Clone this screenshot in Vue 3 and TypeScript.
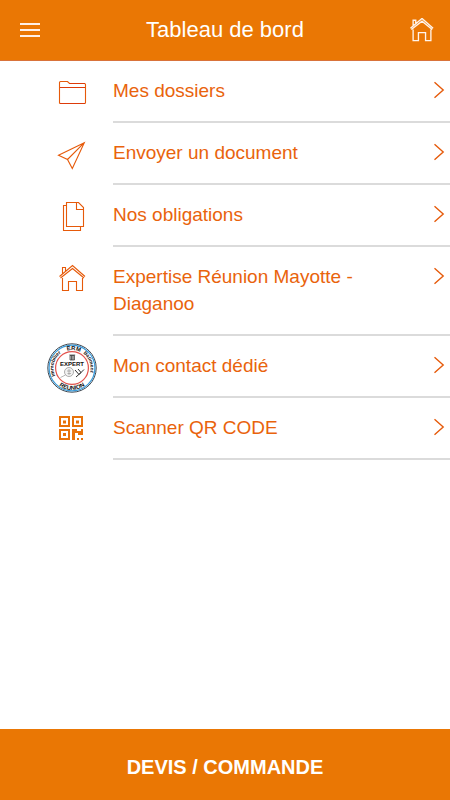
<script setup lang="ts">
type IconName = 'folder' | 'plane' | 'documents' | 'home' | 'stamp' | 'qr'

interface MenuEntry {
  label: string
  icon: IconName
}

const entries: MenuEntry[] = [
  { label: 'Mes dossiers', icon: 'folder' },
  { label: 'Envoyer un document', icon: 'plane' },
  { label: 'Nos obligations', icon: 'documents' },
  { label: 'Expertise Réunion Mayotte - Diaganoo', icon: 'home' },
  { label: 'Mon contact dédié', icon: 'stamp' },
  { label: 'Scanner QR CODE', icon: 'qr' },
]
</script>

<template>
  <div class="screen">
    <header class="topbar">
      <button class="bar-button" type="button" aria-label="Menu">
        <svg class="burger" viewBox="0 0 20 16" aria-hidden="true">
          <path d="M0 2H20M0 8H20M0 14H20" />
        </svg>
      </button>
      <h1 class="title">Tableau de bord</h1>
      <a class="bar-button" href="#" aria-label="Accueil">
        <svg class="bar-home" viewBox="12 11 27 27" aria-hidden="true">
          <path d="M12.5 22.5 25.5 11.5 38 22.5M13.5 24 25.5 14.5 37 24M15.5 24V36.5H21.5V27.5H29.5V36.5H35.5V24M15.5 19.5V13.5H18.5V17" />
        </svg>
      </a>
    </header>

    <main class="content">
      <ul class="menu">
        <li v-for="entry in entries" :key="entry.label">
          <a class="entry" href="#">
            <svg class="icon" viewBox="0 0 50 50" aria-hidden="true">
              <template v-if="entry.icon === 'folder'">
                <path class="line" d="M12.5 35.5V14.5Q12.5 13.5 13.5 13.5H20.5L22.5 15.5H37.5Q38.5 15.5 38.5 16.5V34.5Q38.5 35.5 37.5 35.5H13.5Q12.5 35.5 12.5 34.5" />
                <path class="line deep" d="M13 19.5H38M22.5 15.5H38M13 35.5H38" />
              </template>
              <path v-else-if="entry.icon === 'plane'" class="line" d="M37.3 12.7 11.5 25.3 20.5 29.5 25.3 38.5ZM20.5 29.5 37.3 12.7" />
              <template v-else-if="entry.icon === 'documents'">
                <path class="line" d="M19.5 10.5H31.5L36.5 15.5V34.5H19.5ZM29.5 11V17.5H36" />
                <path class="line" d="M19 13.5H16.5V38.5H33.5V35" />
              </template>
              <path v-else-if="entry.icon === 'home'" class="line" d="M12.5 22.5 25.5 11.5 38 22.5M13.5 24 25.5 14.5 37 24M15.5 24V36.5H21.5V27.5H29.5V36.5H35.5V24M15.5 19.5V13.5H18.5V17" />
              <template v-else-if="entry.icon === 'stamp'">
                <defs>
                  <path id="stamp-upper" d="M7 25A18 18 0 0 1 43 25" />
                  <path id="stamp-left" d="M10.8 36.9A18.5 18.5 0 0 1 25 6.5" />
                  <path id="stamp-right" d="M25 6.5A18.5 18.5 0 0 1 39.2 36.9" />
                  <path id="stamp-lower" d="M3 25A22 22 0 0 0 47 25" />
                </defs>
                <circle cx="25" cy="25" r="24.2" fill="#fff" stroke="#27313c" stroke-width="0.9" />
                <circle cx="25" cy="25" r="22.9" fill="none" stroke="#3b9bd9" stroke-width="1.2" />
                <circle cx="25" cy="25" r="16.4" fill="#fff" stroke="#e2524c" stroke-width="1.2" />
                <text class="stamp-text"><textPath href="#stamp-upper" startOffset="53%">ERM</textPath></text>
                <text class="stamp-text small"><textPath href="#stamp-left" startOffset="42%">Immobilier</textPath></text>
                <text class="stamp-text small"><textPath href="#stamp-right" startOffset="54%">Batiment</textPath></text>
                <text class="stamp-text"><textPath href="#stamp-lower" startOffset="50%">REUNION</textPath></text>
                <path d="M23 12.5H27.5V17H23ZM24.5 12.5V17M26 12.5V17M22.3 12H28.2" fill="#ccc" stroke="#333" stroke-width="0.7" />
                <circle cx="22" cy="29" r="4.5" fill="#f2f2f2" stroke="#999" stroke-width="0.8" />
                <path d="M18.5 32 13.5 34.5M20 28H24M20.5 30.5H24M22 26V32" fill="none" stroke="#999" stroke-width="0.7" />
                <path d="M28 27 32 31.5 37 26.5M29 34 34 29.5 31 26" fill="none" stroke="#333" stroke-width="1" />
                <text class="stamp-text" x="25" y="23.4">EXPERT</text>
              </template>
              <path v-else class="solid" fill-rule="evenodd" d="M12 11H23V22H12ZM14 13V20H21V13ZM16 15.5H19V18.5H16ZM25 11H36V22H25ZM27 13V20H34V13ZM29 15.5H32V18.5H29ZM12 24H23V35H12ZM14 26V33H21V26ZM16 28H19V31H16ZM25 24H30V26H34V24H36V30H31V28H28V35H25ZM30 33H32V35H30ZM34 33H36V35H34Z" />
            </svg>
            <span class="row">
              <span class="label">{{ entry.label }}</span>
              <svg class="chevron" viewBox="0 0 12 18" aria-hidden="true">
                <path d="M1.5 1.3 10.2 9 1.5 16.7" />
              </svg>
            </span>
          </a>
        </li>
      </ul>
    </main>

    <button class="order" type="button">DEVIS / COMMANDE</button>
  </div>
</template>

<style>
body {
  margin: 0;
  background: #fff;
}
</style>

<style scoped>
.screen {
  display: flex;
  flex-direction: column;
  min-height: 100vh;
  font-family: "Liberation Sans", Arial, sans-serif;
}

.topbar {
  display: flex;
  align-items: center;
  justify-content: space-between;
  box-sizing: border-box;
  height: 61px;
  padding: 0 16px;
  background: #ea7704;
  border-bottom: 1px solid #d9733a;
}

.bar-button {
  display: flex;
  padding: 4px;
  margin: 0;
  border: 0;
  background: none;
}

.burger {
  width: 20px;
  height: 16px;
  fill: none;
  stroke: #fff0e8;
  stroke-width: 2;
}

.bar-home {
  width: 24px;
  height: 24px;
  margin-right: -4px;
  fill: none;
  stroke: #fff4ec;
  stroke-width: 1.5;
}

.title {
  margin: 0;
  color: #fff;
  font-size: 22px;
  font-weight: 400;
  line-height: 28px;
}

.content {
  flex: 1;
}

.menu {
  margin: 0;
  padding: 0;
  list-style: none;
}

.entry {
  display: flex;
  align-items: flex-start;
  gap: 16px;
  padding-left: 47px;
  color: #e9630c;
  text-decoration: none;
}

.icon {
  flex: none;
  width: 50px;
  height: 50px;
  margin-top: 7px;
}

.line {
  fill: none;
  stroke: #e65a0a;
  stroke-width: 1.1;
}

.deep {
  stroke: #dd3b0a;
}

.solid {
  fill: #e87209;
}

.stamp-text {
  fill: #111;
  font-size: 6px;
  font-weight: 700;
  text-anchor: middle;
}

.small {
  font-size: 5px;
}

.row {
  display: flex;
  flex: 1;
  align-items: flex-start;
  justify-content: space-between;
  padding: 16px 5px 17px 0;
  border-bottom: 2px solid #dbdbdb;
}

.label {
  max-width: 270px;
  font-size: 19px;
  line-height: 27px;
}

.chevron {
  flex: none;
  width: 12px;
  height: 18px;
  margin-top: 4px;
  fill: none;
  stroke: #e65a0a;
  stroke-width: 1.4;
}

.order {
  height: 71px;
  padding: 4px 0 0;
  border: 0;
  background: #ea7704;
  color: #fff;
  font-family: inherit;
  font-size: 20px;
  font-weight: 700;
  line-height: 24px;
}
</style>
